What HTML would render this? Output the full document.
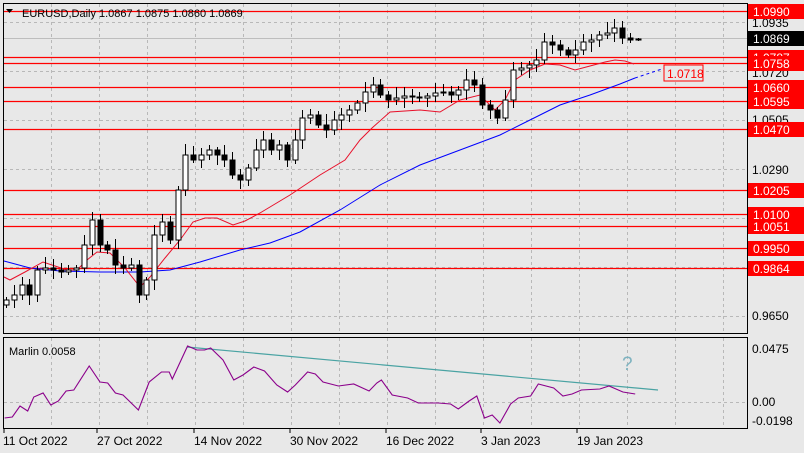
<!DOCTYPE html>
<html><head><meta charset="utf-8"><style>
html,body{margin:0;padding:0;background:#e8e8e8;}
svg{display:block;font-family:"Liberation Sans",sans-serif;}
</style></head><body>
<svg id="s" width="804" height="453" xmlns="http://www.w3.org/2000/svg">
<rect width="804" height="453" fill="#e8e8e8"/>
<g id="grid" stroke="#b8b8b8" stroke-dasharray="3,3" stroke-width="1"></g>
<line x1="4" y1="38.5" x2="747" y2="38.5" stroke="#bdbdbd"/>
<g id="red" stroke="#ff0000" stroke-width="1.2"></g>
<polyline id="ma2" fill="none" stroke="#0000ff" stroke-width="1"/>
<polyline points="635,78 665,68" fill="none" stroke="#0000ff" stroke-dasharray="3,3"/>
<polyline id="ma1" fill="none" stroke="#e8102a" stroke-width="1"/>
<g id="candles"></g>
<rect x="664" y="65" width="39" height="16" fill="#e8e8e8" stroke="#ff0000"/>
<text x="667" y="78" font-size="12" fill="#ff0000">1.0718</text>
<text x="22" y="17" font-size="11" fill="#000">EURUSD,Daily  1.0867 1.0875 1.0860 1.0869</text>
<path d="M6,9 L13,9 L9.5,13 Z" fill="#000"/>
<rect x="3.5" y="3.5" width="744" height="330" fill="none" stroke="#000"/>
<g id="labels" font-size="12"></g>
<rect x="3.5" y="337.5" width="744" height="91" fill="none" stroke="#000"/>
<g id="igrid" stroke="#b8b8b8" stroke-dasharray="3,3"></g>
<line x1="187" y1="347" x2="658" y2="390" stroke="#4aa3a3" stroke-width="1.2"/>
<polyline id="marlin" fill="none" stroke="#8b008b" stroke-width="1.1"/>
<text x="622" y="370" font-size="19" fill="#7fb3c0">?</text>
<text x="9" y="355" font-size="11" fill="#000">Marlin 0.0058</text>
<text x="752" y="353" font-size="12" fill="#000">0.0475</text>
<text x="752" y="406" font-size="12" fill="#000">0.00</text>
<text x="752" y="425" font-size="12" fill="#000">-0.0198</text>
<g font-size="12" fill="#000">
<text x="3" y="445">11 Oct 2022</text><text x="97" y="445">27 Oct 2022</text><text x="194" y="445">14 Nov 2022</text><text x="290" y="445">30 Nov 2022</text><text x="386" y="445">16 Dec 2022</text><text x="481" y="445">3 Jan 2023</text><text x="577" y="445">19 Jan 2023</text>
</g>
<g stroke="#000"><line x1="4" y1="429" x2="4" y2="433"/><line x1="97" y1="429" x2="97" y2="433"/><line x1="194" y1="429" x2="194" y2="433"/><line x1="290" y1="429" x2="290" y2="433"/><line x1="386" y1="429" x2="386" y2="433"/><line x1="481" y1="429" x2="481" y2="433"/><line x1="577" y1="429" x2="577" y2="433"/></g>
</svg>
<script>
(function(){
var NS="http://www.w3.org/2000/svg";
function el(p,t,a,tx){var e=document.createElementNS(NS,t);for(var k in a)e.setAttribute(k,a[k]);if(tx)e.textContent=tx;document.getElementById(p).appendChild(e);return e;}
for(var gx=51;gx<747;gx+=48){el("grid","line",{x1:gx+.5,y1:4,x2:gx+.5,y2:333});el("igrid","line",{x1:gx+.5,y1:338,x2:gx+.5,y2:428});}
[22,71,120,169,218,267,316].forEach(function(y){el("grid","line",{x1:4,y1:y+.5,x2:747,y2:y+.5});});
el("igrid","line",{x1:4,y1:402.5,x2:747,y2:402.5});
[["1.0935",27],["1.0720",77],["1.0505",124],["1.0290",174],["0.9650",320]].forEach(function(a){el("labels","text",{x:752,y:a[1],fill:"#000"},a[0]);});
var reds=[["1.0990",11],["1.0787",57],["1.0758",63],["1.0660",87],["1.0595",101],["1.0470",129],["1.0205",190],["1.0100",214],["1.0051",226],["0.9950",248],["0.9864",268]];
reds.forEach(function(a){el("red","line",{x1:4,y1:a[1]+.5,x2:747,y2:a[1]+.5});});
reds.forEach(function(a){el("labels","rect",{x:748,y:a[1]-7,width:56,height:15,fill:"#ff0000"});el("labels","text",{x:753,y:a[1]+5,fill:"#fff"},a[0]);});
el("labels","rect",{x:748,y:31,width:56,height:15,fill:"#000"});el("labels","text",{x:753,y:43,fill:"#fff"},"1.0869");
document.getElementById("ma1").setAttribute("points","4,277 10,280 25,272 43,262 55,266 67,270 77,270 87,260 97,252 110,253 125,268 140,287 150,277 165,258 180,240 193,222 205,218 217,218 233,225 245,221 260,213 290,195 320,175 345,160 360,140 372,128 390,112 420,110 440,112 460,100 480,95 495,110 505,100 515,80 530,70 545,64 560,65 575,70 590,66 605,62 615,60 625,61 634,64");
document.getElementById("ma2").setAttribute("points","4,261 30,268 60,271 100,272 140,272 170,270 200,262 240,250 270,243 300,232 340,210 380,185 420,165 460,150 500,135 530,120 560,105 590,95 620,84 635,78");
var c=[300,295,285,295,270,268,270,272,270,268,245,220,245,250,265,268,265,295,280,235,222,240,190,155,160,155,150,155,160,175,180,168,150,140,150,145,160,140,118,115,125,130,120,115,110,103,92,85,95,100,98,96,97,98,96,93,92,95,90,80,85,105,110,118,100,70,68,65,60,42,45,50,55,50,42,40,35,33,28,38,40,39];
var prev=305;
for(var i=0;i<c.length;i++){
 var cx=Math.round(6+7.8*i),o=prev,cl=c[i];
 if(Math.abs(o-cl)<1)cl=o+1;
 var tp=Math.min(o,cl),bt=Math.max(o,cl);
 var w1=3+((i*7)%9),w2=3+((i*5)%8);
 if(i==81){w1=1;w2=1;}
 el("candles","line",{x1:cx+.5,y1:tp-w1,x2:cx+.5,y2:bt+w2,stroke:"#000"});
 el("candles","rect",{x:cx-2,y:tp,width:5,height:Math.max(1,bt-tp),fill:(cl<o?"#fff":"#000"),stroke:"#000"});
 prev=cl;
}
var m=[[3,418],[8,417],[13,406],[18,411],[22,397],[28,393],[33,405],[38,401],[43,391],[48,390],[58,366],[65,382],[70,383],[75,393],[80,395],[90,410],[97,382],[105,372],[110,372],[112,379],[122,346],[128,350],[133,350],[137,348],[145,360],[152,380],[158,375],[165,367],[172,371],[180,385],[187,392],[192,385],[200,372],[205,374],[210,382],[220,386],[230,384],[240,391],[245,383],[248,380],[255,395],[265,398],[272,403],[278,403],[285,403],[293,404],[298,409],[305,401],[310,396],[315,418],[320,415],[325,423],[332,404],[337,398],[345,396],[350,384],[360,388],[366,396],[372,394],[378,390],[390,389],[396,386],[405,392],[413,394]];
document.getElementById("marlin").setAttribute("points",m.map(function(p){return (p[0]*1.538).toFixed(1)+","+p[1];}).join(" "));
})();
</script>
</body></html>
